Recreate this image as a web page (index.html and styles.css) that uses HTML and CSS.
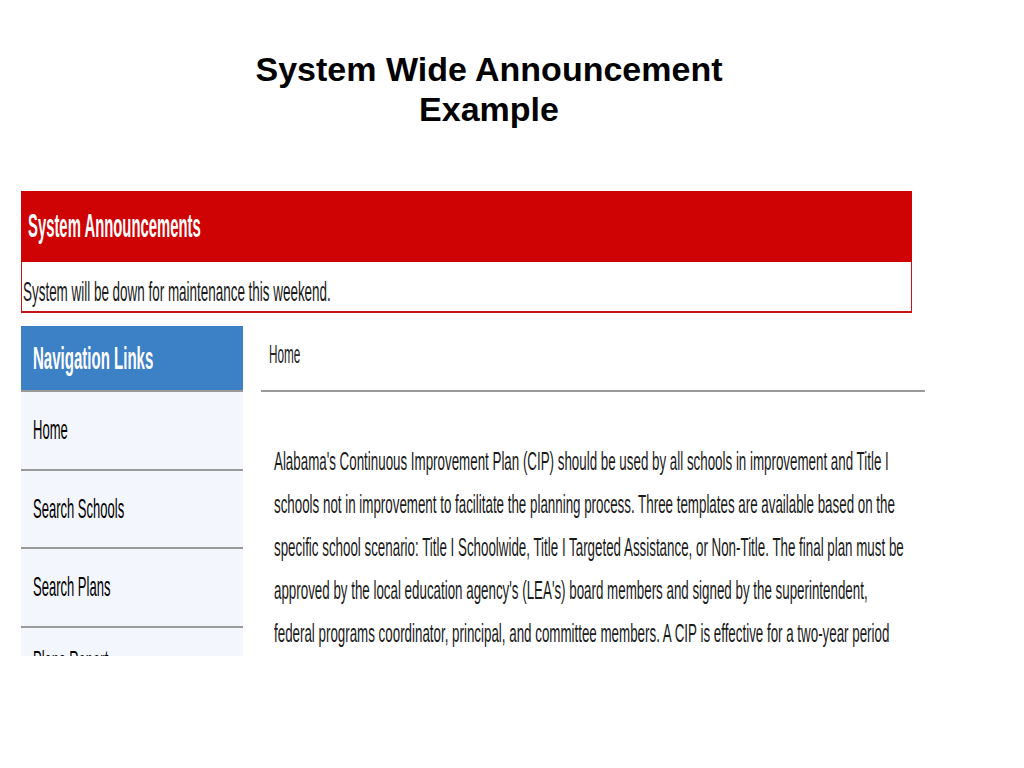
FILE: index.html
```html
<!DOCTYPE html>
<html>
<head>
<meta charset="utf-8">
<link rel="stylesheet" href="styles.css">
</head>
<body>
<div class="slide">
  <h1 class="title">System Wide Announcement<br>Example</h1>

  <div class="announce">
    <div class="announce-head"><span class="sq sq-head">System Announcements</span></div>
    <div class="announce-body"><span class="sq sq-body">System will be down for maintenance this weekend.</span></div>
  </div>

  <div class="page">
    <nav class="nav">
      <div class="nav-head"><span class="sq sq-navhead">Navigation Links</span></div>
      <div class="nav-item"><span class="sq sq-item">Home</span></div>
      <div class="nav-item"><span class="sq sq-item">Search Schools</span></div>
      <div class="nav-item"><span class="sq sq-item">Search Plans</span></div>
      <div class="nav-item nav-item-cut"><span class="sq sq-item">Plans Report</span></div>
    </nav>

    <main class="content">
      <div class="crumb"><span class="sq sq-crumb">Home</span></div>
      <div class="para">
        <div class="line">Alabama's Continuous Improvement Plan (CIP) should be used by all schools in improvement and Title I</div>
        <div class="line">schools not in improvement to facilitate the planning process. Three templates are available based on the</div>
        <div class="line">specific school scenario: Title I Schoolwide, Title I Targeted Assistance, or Non-Title. The final plan must be</div>
        <div class="line">approved by the local education agency's (LEA's) board members and signed by the superintendent,</div>
        <div class="line">federal programs coordinator, principal, and committee members. A CIP is effective for a two-year period</div>
      </div>
    </main>
  </div>
</div>
</body>
</html>
```

FILE: styles.css
```css
html, body {
  margin: 0;
  padding: 0;
  background: #ffffff;
}

.slide {
  width: 1024px;
  height: 768px;
  overflow: hidden;
  font-family: "Liberation Sans", Arial, sans-serif;
  color: #111;
}

.title {
  margin: 0;
  padding: 49px 46px 0 0;
  font-size: 34px;
  line-height: 40px;
  font-weight: bold;
  text-align: center;
  color: #000;
}

.sq {
  display: inline-block;
  white-space: nowrap;
  transform-origin: 0 50%;
  transform: scaleX(0.465);
}

/* announcement box */
.announce {
  margin: 62px 0 0 21px;
  width: 891px;
}

.announce-head {
  height: 71px;
  line-height: 69px;
  background: #cf0303;
  color: #fff;
  padding-left: 7px;
  box-sizing: border-box;
}

.sq-head {
  font-size: 33px;
  font-weight: bold;
  transform: scaleX(0.45);
}

.announce-body {
  height: 51px;
  box-sizing: border-box;
  border: 1px solid #c41616;
  border-top: 0;
  border-bottom-width: 2px;
  padding: 9px 0 0 1px;
  line-height: 42px;
  overflow: hidden;
  color: #1a1a1a;
}

.sq-body {
  font-size: 28px;
  transform: scaleX(0.48);
}

/* page area */
.page {
  display: flex;
  margin: 13px 0 0 21px;
}

.nav {
  width: 222px;
  height: 330px;
  overflow: hidden;
  background: #f4f6fd;
  flex: none;
}

.nav-head {
  height: 66px;
  line-height: 64px;
  background: #3c80c6;
  border-bottom: 2px solid #9a9a9a;
  box-sizing: border-box;
  padding-left: 12px;
  color: #fff;
}

.sq-navhead {
  font-size: 32px;
  font-weight: bold;
  transform: scaleX(0.47);
}

.nav-item {
  height: 78.5px;
  line-height: 76.5px;
  border-bottom: 2px solid #9a9a9a;
  box-sizing: border-box;
  padding-left: 12px;
  color: #000;
}

.nav-item-cut {
  line-height: 66px;
}

.sq-item {
  font-size: 28px;
  transform: scaleX(0.465);
}

.content {
  margin-left: 18px;
  width: 664px;
}

.crumb {
  height: 66px;
  line-height: 57px;
  border-bottom: 2px solid #9a9a9a;
  box-sizing: border-box;
  padding-left: 8px;
  color: #222;
}

.sq-crumb {
  font-size: 25px;
  transform: scaleX(0.47);
}

.para {
  margin-top: 48px;
  margin-left: 13px;
  font-size: 25px;
  line-height: 43px;
  color: #1a1a1a;
  white-space: nowrap;
  transform-origin: 0 0;
  transform: scaleX(0.534);
}

.line {
  display: block;
}
```
